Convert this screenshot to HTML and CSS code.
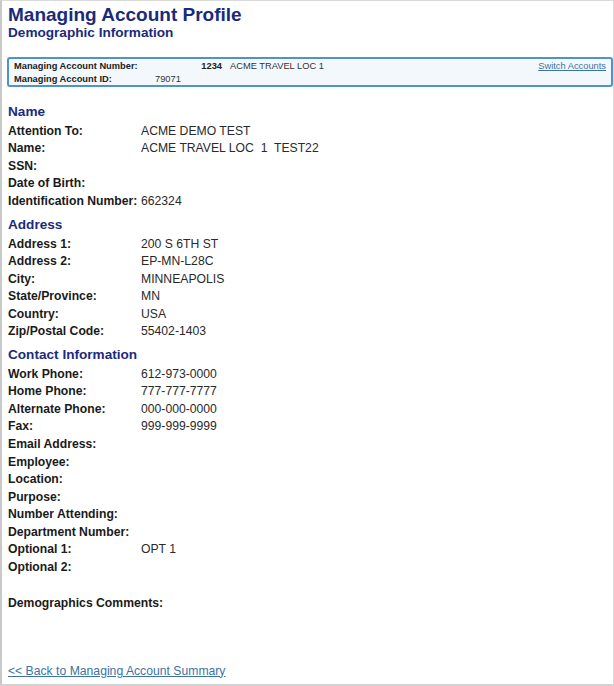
FILE: index.html
```html
<!DOCTYPE html>
<html lang="en">
<head>
<meta charset="utf-8">
<title>Managing Account Profile</title>
<link rel="stylesheet" href="styles.css">
</head>
<body>
<div class="page">
  <h1 class="title">Managing Account Profile</h1>
  <h2 class="subtitle">Demographic Information</h2>

  <div class="acct-box">
    <div class="acct-grid">
      <span class="acct-label">Managing Account Number:</span>
      <span class="acct-num">1234</span>
      <span class="acct-name">ACME TRAVEL LOC 1</span>
      <a class="switch" href="#">Switch Accounts</a>
      <span class="acct-label">Managing Account ID:</span>
      <span class="acct-id">79071</span>
    </div>
  </div>

  <h3 class="section first">Name</h3>
  <div class="fields">
    <span class="lbl">Attention To:</span><span class="val">ACME DEMO TEST</span>
    <span class="lbl">Name:</span><span class="val">ACME TRAVEL LOC&nbsp; 1&nbsp; TEST22</span>
    <span class="lbl">SSN:</span><span class="val"></span>
    <span class="lbl">Date of Birth:</span><span class="val"></span>
    <span class="lbl">Identification Number:</span><span class="val">662324</span>
  </div>

  <h3 class="section">Address</h3>
  <div class="fields">
    <span class="lbl">Address 1:</span><span class="val">200 S 6TH ST</span>
    <span class="lbl">Address 2:</span><span class="val">EP-MN-L28C</span>
    <span class="lbl">City:</span><span class="val">MINNEAPOLIS</span>
    <span class="lbl">State/Province:</span><span class="val">MN</span>
    <span class="lbl">Country:</span><span class="val">USA</span>
    <span class="lbl">Zip/Postal Code:</span><span class="val">55402-1403</span>
  </div>

  <h3 class="section">Contact Information</h3>
  <div class="fields">
    <span class="lbl">Work Phone:</span><span class="val">612-973-0000</span>
    <span class="lbl">Home Phone:</span><span class="val">777-777-7777</span>
    <span class="lbl">Alternate Phone:</span><span class="val">000-000-0000</span>
    <span class="lbl">Fax:</span><span class="val">999-999-9999</span>
    <span class="lbl">Email Address:</span><span class="val"></span>
    <span class="lbl">Employee:</span><span class="val"></span>
    <span class="lbl">Location:</span><span class="val"></span>
    <span class="lbl">Purpose:</span><span class="val"></span>
    <span class="lbl">Number Attending:</span><span class="val"></span>
    <span class="lbl">Department Number:</span><span class="val"></span>
    <span class="lbl">Optional 1:</span><span class="val">OPT 1</span>
    <span class="lbl">Optional 2:</span><span class="val"></span>
  </div>

  <div class="comments">Demographics Comments:</div>

  <a class="back" href="#">&lt;&lt; Back to Managing Account Summary</a>
</div>
</body>
</html>
```

FILE: styles.css
```css
html, body {
  margin: 0;
  padding: 0;
  background: #ffffff;
}

body {
  font-family: "Liberation Sans", Arial, sans-serif;
  color: #1a1a1a;
}

.page {
  box-sizing: border-box;
  width: 614px;
  height: 686px;
  border: 1px solid #dadada;
  border-left: 2px solid #c8c8c8;
  border-bottom: 2px solid #d2d2d2;
  padding: 3px 0 0 6px;
}

.title {
  margin: 0;
  font-size: 19px;
  line-height: 21px;
  font-weight: bold;
  color: #1b2a7c;
}

.subtitle {
  margin: 0;
  font-size: 13.6px;
  line-height: 15px;
  font-weight: bold;
  color: #1b2a7c;
}

.acct-box {
  margin: 17px 0 0 -1px;
  height: 30px;
  box-sizing: border-box;
  border: 2px solid #4f94c9;
  border-radius: 3px;
  background: #f3f8fc;
  padding: 1px 5px 0 5px;
}

.acct-grid {
  display: grid;
  grid-template-columns: 141px 67px auto 1fr auto;
  font-size: 9.3px;
  line-height: 12.5px;
  color: #222;
}

.acct-label {
  font-weight: bold;
  grid-column: 1;
}

.acct-num {
  grid-column: 2;
  font-weight: bold;
  text-align: right;
}

.acct-name {
  grid-column: 3;
  padding-left: 8px;
  color: #333;
}

.switch {
  grid-column: 5;
  color: #3d73a3;
  text-decoration: underline;
}

.acct-id {
  grid-column: 2;
  color: #333;
}

.section {
  margin: 5.2px 0 2.8px 0;
  font-size: 13.6px;
  line-height: 17px;
  font-weight: bold;
  color: #1b2a7c;
}

.section.first {
  margin-top: 16px;
}

.fields {
  display: grid;
  grid-template-columns: 133px 1fr;
  font-size: 12.2px;
  line-height: 17.55px;
}

.lbl {
  font-weight: bold;
  white-space: nowrap;
  color: #1a1a1a;
}

.val {
  color: #2a2a2a;
  white-space: pre;
}

.comments {
  margin-top: 18.5px;
  font-size: 12.2px;
  line-height: 17.5px;
  font-weight: bold;
  color: #1a1a1a;
}

.back {
  display: inline-block;
  margin-top: 50.5px;
  font-size: 12.2px;
  line-height: 17.5px;
  color: #3d73a3;
  text-decoration: underline;
}
```
